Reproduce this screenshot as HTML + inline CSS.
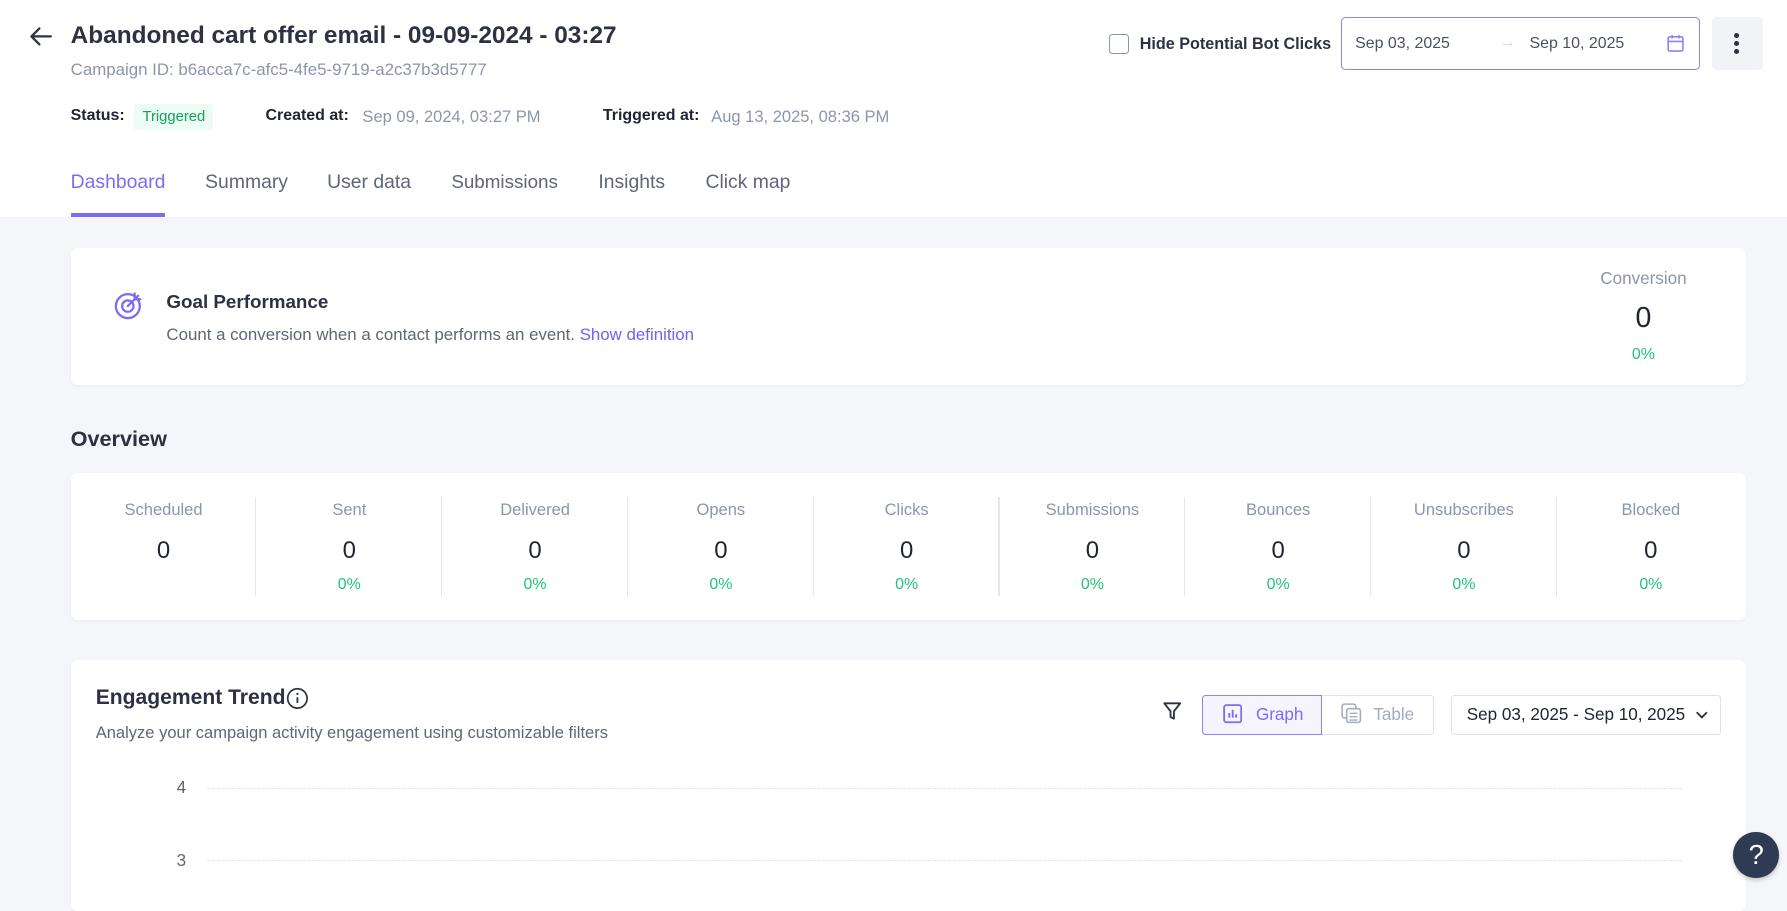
<!DOCTYPE html>
<html><head><meta charset="utf-8"><style>
html{zoom:1.1397}
body{margin:0;width:1568px;height:774px;overflow:hidden;background:#f5f6fa;font-family:"Liberation Sans",sans-serif;position:relative;color:#2d3142}
.a{position:absolute;white-space:nowrap}
.hdr{position:absolute;left:0;top:0;width:1568px;height:190px;background:#fff}
.card{position:absolute;background:#fff;border-radius:6px;box-shadow:0 1px 3px rgba(0,0,0,.04)}
.col{position:absolute;top:0;width:163px;height:130px;text-align:center}
.col .l{position:absolute;top:24px;width:100%;font-size:14.5px;color:#8b95ab}
.col .v{position:absolute;top:56px;width:100%;font-size:21px;color:#1f2433}
.col .p{position:absolute;top:90px;width:100%;font-size:14px;color:#22c17a}
.col .d{position:absolute;right:0;top:21px;width:1px;height:87px;background:#e4e6eb}
.grid{position:absolute;left:182px;width:1294px;border-top:1px dashed #dfe2e8}
</style></head><body>
<div class="hdr"></div>
<svg class="a" style="left:25px;top:22px" width="22" height="20" viewBox="0 0 22 20"><path d="M20 10H3M10 3L3 10l7 7" fill="none" stroke="#2d3142" stroke-width="2" stroke-linecap="round" stroke-linejoin="round"/></svg>
<div class="a" style="left:62px;top:19px;font-size:21.4px;font-weight:bold;color:#2d3142">Abandoned cart offer email - 09-09-2024 - 03:27</div>
<div class="a" style="left:62px;top:53px;font-size:14.8px;color:#8b95ab">Campaign ID: b6acca7c-afc5-4fe5-9719-a2c37b3d5777</div>
<div class="a" style="left:62px;top:94px;font-size:14px;font-weight:bold;color:#1f2433">Status:</div>
<div class="a" style="left:118px;top:91px;height:23px;line-height:23px;padding:0 7px;background:#ecfbf3;color:#16a060;font-size:13px;border-radius:2px">Triggered</div>
<div class="a" style="left:233px;top:94px;font-size:14px;font-weight:bold;color:#1f2433">Created at:</div>
<div class="a" style="left:318px;top:94px;font-size:14.5px;color:#8b95ab">Sep 09, 2024, 03:27 PM</div>
<div class="a" style="left:529px;top:94px;font-size:14px;font-weight:bold;color:#1f2433">Triggered at:</div>
<div class="a" style="left:624px;top:94px;font-size:14.5px;color:#8b95ab">Aug 13, 2025, 08:36 PM</div>
<div class="a" style="left:62px;top:150px;font-size:17px;color:#7a6cf5">Dashboard</div>
<div class="a" style="left:180px;top:150px;font-size:17px;color:#5e6678">Summary</div>
<div class="a" style="left:287px;top:150px;font-size:17px;color:#5e6678">User data</div>
<div class="a" style="left:396px;top:150px;font-size:16.5px;color:#5e6678">Submissions</div>
<div class="a" style="left:525px;top:150px;font-size:17px;color:#5e6678">Insights</div>
<div class="a" style="left:619px;top:150px;font-size:17px;color:#5e6678">Click map</div>
<div class="a" style="left:62px;top:187px;width:83px;height:3px;background:#7a6cf5"></div>

<div class="a" style="left:973px;top:30px;width:16px;height:16px;border:1.5px solid #8b95ab;border-radius:3px"></div>
<div class="a" style="left:1000px;top:31px;font-size:14.2px;font-weight:bold;color:#2d3142">Hide Potential Bot Clicks</div>
<div class="a" style="left:1177px;top:15px;width:315px;height:46px;border:1px solid #8f80f7;border-radius:4px;box-sizing:border-box"></div>
<div class="a" style="left:1189px;top:31px;font-size:14px;color:#4a5163">Sep 03, 2025</div>
<div class="a" style="left:1316px;top:30px;font-size:14px;color:#cfd3da">→</div>
<div class="a" style="left:1342px;top:31px;font-size:14px;color:#4a5163">Sep 10, 2025</div>
<svg class="a" style="left:1463px;top:30px" width="15" height="16" viewBox="0 0 15 16"><rect x="1" y="2.5" width="13" height="12.5" rx="1.5" fill="none" stroke="#8f80f7" stroke-width="1.4"/><path d="M1 6.5h13M4.5 1v3M10.5 1v3" stroke="#8f80f7" stroke-width="1.4"/></svg>
<div class="a" style="left:1502px;top:15px;width:45px;height:46px;background:#f1f3f7;border-radius:4px"></div>
<svg class="a" style="left:1520px;top:27px" width="8" height="22"><circle cx="4" cy="4" r="2.2" fill="#2d3142"/><circle cx="4" cy="11" r="2.2" fill="#2d3142"/><circle cx="4" cy="18" r="2.2" fill="#2d3142"/></svg>

<div class="card" style="left:62px;top:218px;width:1470px;height:120px"></div>
<svg class="a" style="left:99px;top:254px" width="28" height="28" viewBox="0 0 28 28"><circle cx="13" cy="15" r="10.5" fill="none" stroke="#7a6cf5" stroke-width="2"/><circle cx="13" cy="15" r="5" fill="none" stroke="#7a6cf5" stroke-width="2"/><path d="M13 15L22 6M19 4v5h5" fill="none" stroke="#7a6cf5" stroke-width="2" stroke-linecap="round"/></svg>
<div class="a" style="left:146px;top:255px;font-size:16.5px;font-weight:bold;color:#2d3142">Goal Performance</div>
<div class="a" style="left:146px;top:285px;font-size:14.8px;color:#5e6678">Count a conversion when a contact performs an event. <span style="color:#6f62f2">Show definition</span></div>
<div class="a" style="left:1392px;top:236px;width:100px;text-align:center;font-size:15px;color:#8b95ab">Conversion</div>
<div class="a" style="left:1392px;top:265px;width:100px;text-align:center;font-size:25px;color:#1f2433">0</div>
<div class="a" style="left:1392px;top:304px;width:100px;text-align:center;font-size:14px;color:#22c17a">0%</div>

<div class="a" style="left:62px;top:374px;font-size:19px;font-weight:bold;color:#2d3142">Overview</div>
<div class="card" style="left:62px;top:415px;width:1470px;height:129px">
<div class="col" style="left:0"><div class="l">Scheduled</div><div class="v">0</div><div class="d"></div></div>
<div class="col" style="left:163px"><div class="l">Sent</div><div class="v">0</div><div class="p">0%</div><div class="d"></div></div>
<div class="col" style="left:326px"><div class="l">Delivered</div><div class="v">0</div><div class="p">0%</div><div class="d"></div></div>
<div class="col" style="left:489px"><div class="l">Opens</div><div class="v">0</div><div class="p">0%</div><div class="d"></div></div>
<div class="col" style="left:652px"><div class="l">Clicks</div><div class="v">0</div><div class="p">0%</div><div class="d"></div></div>
<div class="col" style="left:815px"><div class="l">Submissions</div><div class="v">0</div><div class="p">0%</div><div class="d"></div></div>
<div class="col" style="left:978px"><div class="l">Bounces</div><div class="v">0</div><div class="p">0%</div><div class="d"></div></div>
<div class="col" style="left:1141px"><div class="l">Unsubscribes</div><div class="v">0</div><div class="p">0%</div><div class="d"></div></div>
<div class="col" style="left:1305px"><div class="l">Blocked</div><div class="v">0</div><div class="p">0%</div></div>
</div>

<div class="card" style="left:62px;top:579px;width:1470px;height:220px"></div>
<div class="a" style="left:84px;top:602px;font-size:18.5px;font-weight:bold;color:#2d3142">Engagement Trend</div>
<svg class="a" style="left:251px;top:603px" width="20" height="20"><circle cx="10" cy="10" r="8.5" fill="none" stroke="#2d3142" stroke-width="1.5"/><path d="M10 9v5" stroke="#2d3142" stroke-width="1.6"/><circle cx="10" cy="6" r="1" fill="#2d3142"/></svg>
<div class="a" style="left:84px;top:634px;font-size:14.5px;color:#5e6678">Analyze your campaign activity engagement using customizable filters</div>
<svg class="a" style="left:1020px;top:615px" width="18" height="18" viewBox="0 0 18 18"><path d="M2 2h14l-5.5 7v6.5l-3-1.5V9z" fill="none" stroke="#2d3142" stroke-width="1.6" stroke-linejoin="round"/></svg>
<div class="a" style="left:1055px;top:610px;width:203px;height:35px;border:1px solid #dfe2e8;border-radius:3px;box-sizing:border-box"></div>
<div class="a" style="left:1055px;top:610px;width:105px;height:35px;border:1px solid #8f80f7;background:#f6f4ff;border-radius:3px 0 0 3px;box-sizing:border-box"></div>
<svg class="a" style="left:1073px;top:618px" width="17" height="17"><rect x="1" y="1" width="15" height="15" rx="2" fill="none" stroke="#7a6cf5" stroke-width="1.6"/><path d="M5.5 12V8M8.5 12V5M11.5 12V9" stroke="#7a6cf5" stroke-width="1.6"/></svg>
<div class="a" style="left:1102px;top:619px;font-size:15px;color:#7a6cf5">Graph</div>
<svg class="a" style="left:1177px;top:617px" width="18" height="18"><rect x="1" y="1" width="12" height="12" rx="2" fill="none" stroke="#a3abbd" stroke-width="1.4"/><rect x="5" y="5" width="12" height="12" rx="2" fill="#fff" stroke="#a3abbd" stroke-width="1.4"/><path d="M7.5 9h7M7.5 12h7M7.5 15h7" stroke="#a3abbd" stroke-width="1.2"/></svg>
<div class="a" style="left:1205px;top:619px;font-size:15px;color:#a3abbd">Table</div>
<div class="a" style="left:1273px;top:610px;width:237px;height:35px;border:1px solid #dfe2e8;border-radius:3px;box-sizing:border-box"></div>
<div class="a" style="left:1287px;top:619px;font-size:15px;color:#1f2433">Sep 03, 2025 - Sep 10, 2025</div>
<svg class="a" style="left:1487px;top:623px" width="12" height="9"><path d="M1.5 2l4.5 4.5L10.5 2" fill="none" stroke="#2d3142" stroke-width="1.6"/></svg>
<div class="a" style="left:155px;top:683px;font-size:15px;color:#5e6678">4</div>
<div class="grid" style="top:691px"></div>
<div class="a" style="left:155px;top:747px;font-size:15px;color:#5e6678">3</div>
<div class="grid" style="top:755px"></div>
<div class="a" style="left:1521px;top:730px;width:40px;height:40px;border-radius:50%;background:#2f3b52;color:#fff;font-size:24px;line-height:40px;text-align:center;box-shadow:0 2px 4px rgba(0,0,0,.2)">?</div>
</body></html>
